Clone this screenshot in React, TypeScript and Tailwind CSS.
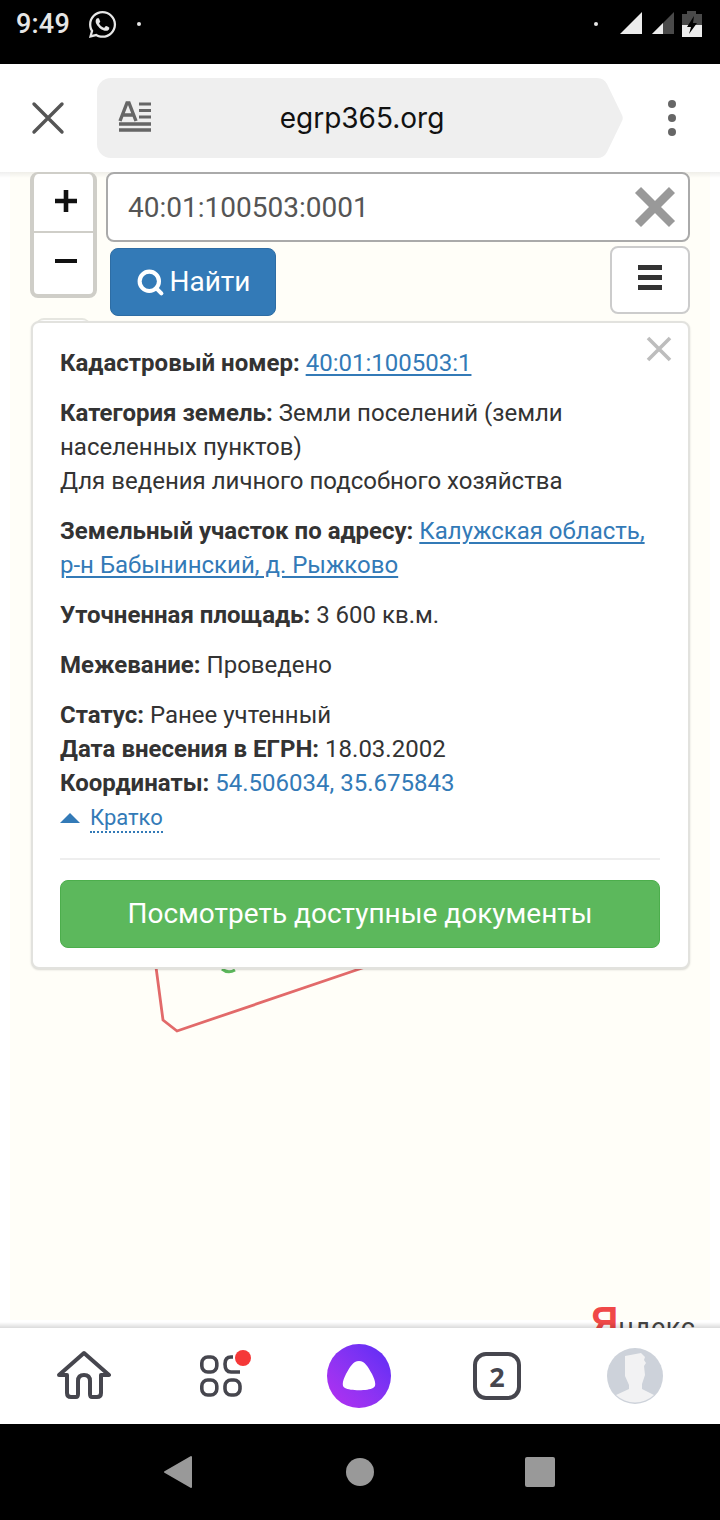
import { FaWhatsapp } from 'react-icons/fa';
import { Search } from 'lucide-react';

function StatusBar() {
  return (
    <div className="h-[64px] shrink-0 bg-black flex items-center pl-[16px] pr-[17px] pb-[16px] text-[#e6e6e6]">
      <span className="text-[27px] font-medium leading-none tracking-[0.2px]">9:49</span>
      <FaWhatsapp className="ml-[17px] w-[31px] h-[31px]" />
      <span className="ml-[19px] w-[4px] h-[4px] rounded-full bg-[#e6e6e6]" />
      <span className="ml-auto w-[4px] h-[4px] rounded-full bg-[#e6e6e6]" />
      <svg className="ml-[21px]" width="84" height="26" viewBox="0 0 84 26">
        <path d="M1 23 L23 1 V23 Z" fill="#ececec" />
        <path d="M33 23 L55 1 V23 Z" fill="#4a4a4a" />
        <path d="M33 23 L44 12 V23 Z" fill="#ececec" />
        <path d="M63 3 H68 V0 H77 V3 H83 V14 H63 Z" fill="#4a4a4a" />
        <path d="M63 14 H83 V26 H63 Z" fill="#ececec" />
        <path d="M75 5 L68 16 H72 L70 23 L78 12 H74 Z" fill="#000" />
      </svg>
    </div>
  );
}

function BrowserBar() {
  return (
    <div className="h-[108px] shrink-0 bg-white flex items-center">
      <div className="w-[97px] shrink-0 flex justify-center pr-[1px]">
        <svg width="34" height="34" viewBox="0 0 34 34">
          <path d="M3 3 L31 31 M31 3 L3 31" stroke="#555" strokeWidth="3.4" strokeLinecap="round" />
        </svg>
      </div>
      <div className="relative w-[526px] h-[80px] flex items-center justify-center">
        <div className="absolute left-0 top-0 bottom-0 w-[500px] bg-[#efefef] rounded-l-[14px]" />
        <svg className="absolute right-0 top-0" width="30" height="80" viewBox="0 0 30 80">
          <path d="M0 0 H4 Q11 0 14 6 L29 37 Q30.5 40 29 43 L14 74 Q11 80 4 80 H0 Z" fill="#efefef" />
        </svg>
        <svg className="absolute left-[21px] top-[23px]" width="34" height="32" viewBox="0 0 34 32">
          <path d="M2 20 L9 2 H11 L18 20 M5 14 H15" fill="none" stroke="#666" strokeWidth="3.4" />
          <path d="M21 3 H33 M21 9.5 H33 M21 16 H33" stroke="#666" strokeWidth="3" />
          <path d="M1 23 H33 M1 29 H33" stroke="#666" strokeWidth="3.4" />
        </svg>
        <span className="relative ml-[4px] font-[Inter,sans-serif] text-[28px] leading-none text-[#111] pb-[1px]">egrp365.org</span>
      </div>
      <div className="flex-1 flex flex-col items-center gap-[6px]">
        <span className="w-[8px] h-[8px] rounded-full bg-[#666]" />
        <span className="w-[8px] h-[8px] rounded-full bg-[#666]" />
        <span className="w-[8px] h-[8px] rounded-full bg-[#666]" />
      </div>
    </div>
  );
}

function ZoomControl() {
  return (
    <div className="w-[67px] h-[126px] shrink-0 border-[4px] border-t-[2px] border-[#cfcec8] rounded-[8px] bg-white flex flex-col ml-[-1px]">
      <div className="h-[59px] border-b-2 border-[#cfcec8] flex items-center justify-center pb-[3px] pl-[4px]">
        <svg width="24" height="24" viewBox="0 0 24 24"><path d="M12 1 V23 M1 12 H23" stroke="#111" strokeWidth="4.6" /></svg>
      </div>
      <div className="flex-1 flex items-start justify-center pt-[26px] pl-[4px]">
        <span className="block w-[22px] h-[4px] bg-[#111]" />
      </div>
    </div>
  );
}

function SearchForm() {
  return (
    <div className="flex-1">
      <div className="h-[70px] bg-white border-2 border-[#aaaaaa] rounded-[8px] flex items-center pl-[20px] pr-[12px] justify-between">
        <span className="text-[28px] leading-none text-[#555] pt-[1px]">40:01:100503:0001</span>
        <svg width="42" height="42" viewBox="0 0 42 42">
          <path d="M4 4 L38 38 M38 4 L4 38" stroke="#999" strokeWidth="8.5" />
        </svg>
      </div>
      <div className="flex justify-between items-start">
        <button className="mt-[6px] ml-[4px] w-[166px] h-[68px] bg-[#337ab7] border border-[#2e6da4] rounded-[8px] flex items-center justify-center gap-[5px] text-white text-[28px] leading-none">
          <Search className="w-[29px] h-[29px] mt-[1px]" strokeWidth={3.4} />
          Найти
        </button>
        <button className="mt-[4px] w-[80px] h-[68px] bg-white border-2 border-[#cccccc] rounded-[8px] flex flex-col items-center justify-center gap-[5px] pb-[6px]">
          <span className="w-[24px] h-[5px] bg-[#333]" />
          <span className="w-[24px] h-[5px] bg-[#333]" />
          <span className="w-[24px] h-[5px] bg-[#333]" />
        </button>
      </div>
    </div>
  );
}

function InfoPopup() {
  const link = 'text-[#337ab7] underline underline-offset-[3px]';
  return (
    <div className="relative mt-[5px] bg-white border-2 border-[#e2e2de] rounded-[8px] pl-[27px] pr-[28px] pt-[23px] pb-[19px] text-[24px] leading-[34px] text-[#333] shadow-[0_1px_2px_rgba(0,0,0,0.15)]">
      <svg className="absolute right-[16px] top-[13px]" width="26" height="26" viewBox="0 0 26 26">
        <path d="M2 2 L24 24 M24 2 L2 24" stroke="#bdbdbd" strokeWidth="3.6" />
      </svg>
      <p className="mb-[16px]"><b className="font-bold">Кадастровый номер:</b> <a className={link}>40:01:100503:1</a></p>
      <p className="mb-[16px]">
        <b className="font-bold">Категория земель:</b> Земли поселений (земли<br />
        населенных пунктов)<br />
        Для ведения личного подсобного хозяйства
      </p>
      <p className="mb-[16px] whitespace-nowrap">
        <b className="font-bold">Земельный участок по адресу:</b> <a className={link}>Калужская область,</a><br />
        <a className={link}>р-н Бабынинский, д. Рыжково</a>
      </p>
      <p className="mb-[16px]"><b className="font-bold">Уточненная площадь:</b> 3 600 кв.м.</p>
      <p className="mb-[16px]"><b className="font-bold">Межевание:</b> Проведено</p>
      <p>
        <b className="font-bold">Статус:</b> Ранее учтенный<br />
        <b className="font-bold">Дата внесения в ЕГРН:</b> 18.03.2002<br />
        <b className="font-bold">Координаты:</b> <span className="text-[#337ab7]">54.506034, 35.675843</span>
      </p>
      <div className="flex items-center h-[34px] mt-[1px]">
        <svg width="20" height="10" viewBox="0 0 20 10" className="mt-[-1px]"><path d="M10 0 L20 10 H0 Z" fill="#337ab7" /></svg>
        <span className="ml-[10px] text-[22px] text-[#337ab7] leading-[27px] border-b-2 border-dotted border-[#337ab7]">Кратко</span>
      </div>
      <div className="mt-[23px] h-[2px] bg-[#eeeeee]" />
      <button className="mt-[20px] w-full h-[68px] bg-[#5cb85c] border border-[#4cae4c] rounded-[8px] text-white text-[28px] leading-none">
        Посмотреть доступные документы
      </button>
    </div>
  );
}

function MapArea() {
  return (
    <div className="relative flex-1 overflow-hidden bg-white">
      {/* map tile and the land plot outline */}
      <div className="absolute left-[10px] right-[10px] top-0 bottom-[8px] bg-[#fffef8]" />
      <svg className="absolute left-0 top-[760px]" width="400" height="120" viewBox="0 0 400 120">
        <path d="M154 20 L163 88 L177 99 L380 30" fill="none" stroke="#e26a6a" strokeWidth="2.8" />
        <path d="M222 37 Q228 42 235 38" fill="none" stroke="#5cb85c" strokeWidth="3" />
      </svg>
      <div className="absolute left-[591px] top-[1129px] flex items-end leading-none whitespace-nowrap">
        <span className="text-[#f04848] text-[42px] font-bold font-[Liberation_Sans,sans-serif] scale-x-90 origin-left mr-[-3px]">Я</span>
        <span className="text-[#444] text-[27px] tracking-[0.5px] mb-[1px]">ндекс</span>
      </div>
      <div className="absolute inset-x-0 top-0 h-[6px] bg-gradient-to-b from-[#00000010] to-transparent" />
      <div className="absolute inset-x-0 bottom-0 h-[6px] bg-gradient-to-t from-[#00000024] to-transparent" />

      <div className="relative px-[30px] flex flex-col">
        <div className="flex gap-[9px] pl-[1px]">
          <ZoomControl />
          <SearchForm />
        </div>
        <div className="relative">
          <div className="absolute left-[6px] top-[2px] w-[54px] h-[8px] bg-white rounded-t-[8px] border-t-2 border-[#e6e6e0]" />
          <div className="relative pl-[1px]">
            <InfoPopup />
          </div>
        </div>
      </div>
    </div>
  );
}

function BottomBar() {
  return (
    <div className="h-[96px] shrink-0 bg-white">
      <div className="grid grid-cols-[repeat(5,138px)] h-full items-center justify-items-center pl-[14px]">
        <svg className="ml-[2px] mb-[2px]" width="54" height="50" viewBox="0 0 54 50" fill="none" stroke="#46464e" strokeWidth="4" strokeLinejoin="round" strokeLinecap="round">
          <path d="M27 3 L52 25 H44 V43 Q44 47 40 47 H35 Q33 47 33 44 V31 Q33 25 27 25 Q21 25 21 31 V44 Q21 47 19 47 H14 Q10 47 10 43 V25 H2 Z" />
        </svg>
        <svg className="ml-[10px] mb-[2px]" width="52" height="50" viewBox="0 0 52 50" fill="none" stroke="#46464e" strokeWidth="3.6">
          <rect x="1.8" y="7" width="15" height="15" rx="6" />
          <rect x="1.8" y="30" width="15" height="15" rx="6" />
          <rect x="25" y="30" width="15" height="15" rx="6" />
          <path d="M33 7 H31 Q25 7 25 14 Q25 22 31 22 H40" />
          <circle cx="43" cy="8" r="8" fill="#f53838" stroke="none" />
        </svg>
        <div className="w-[64px] h-[64px] rounded-full bg-gradient-to-tr from-[#b62ef0] to-[#5b2bf5] flex items-center justify-center">
          <svg width="34" height="32" viewBox="0 0 34 32">
            <path d="M17 1 C11 1 8 7 4 14 C1 20 -1 26 3 28 C8 31 26 31 31 28 C35 26 33 20 30 14 C26 7 23 1 17 1 Z" fill="#fff" />
          </svg>
        </div>
        <div className="w-[48px] h-[48px] border-[4px] border-[#46464e] rounded-[13px] flex items-center justify-center text-[#46464e] text-[27px] font-bold leading-none font-[Noto_Sans,sans-serif]">2</div>
        <svg width="56" height="56" viewBox="0 0 56 56">
          <circle cx="28" cy="28" r="28" fill="#cdd2da" />
          <path d="M18 8 L34 5 L38 9 L37 12 L39 15 L37 18 L38 27 L35 36 L35 41 L47 47 A28 28 0 0 1 9 47 L22 41 L22 37 L18 28 Z" fill="#f2f2f3" />
        </svg>
      </div>
    </div>
  );
}

function NavBar() {
  return (
    <div className="h-[96px] shrink-0 bg-black flex items-center pl-[163px] pb-[1px]">
      <svg width="30" height="34" viewBox="0 0 30 34">
        <path d="M28 2 V32 L2 17 Z" fill="#999" stroke="#999" strokeWidth="2" strokeLinejoin="round" />
      </svg>
      <span className="ml-[153px] w-[28px] h-[28px] rounded-full bg-[#999]" />
      <span className="ml-[151px] w-[30px] h-[30px] rounded-[2px] bg-[#999]" />
    </div>
  );
}

export default function App() {
  return (
    <div className="w-[720px] h-[1520px] flex flex-col overflow-hidden font-[Roboto,sans-serif]">
      <StatusBar />
      <BrowserBar />
      <MapArea />
      <BottomBar />
      <NavBar />
    </div>
  );
}
